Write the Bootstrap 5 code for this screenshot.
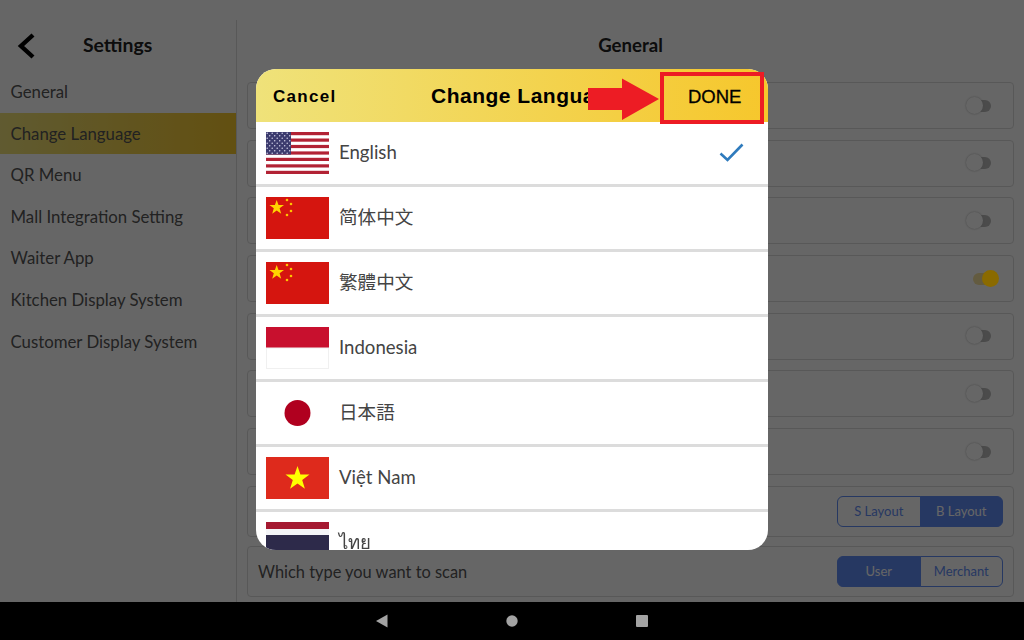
<!DOCTYPE html>
<html lang="en">
<head>
    <meta charset="UTF-8">
    <meta name="viewport" content="width=device-width, initial-scale=1.0">
    <title>Settings - Change Language</title>
    <link rel="stylesheet" href="https://cdn.jsdelivr.net/npm/bootstrap@5.3.0/dist/css/bootstrap.min.css">
    <style>
        html, body { height: 100%; overflow: hidden; }
        body { font-family: Lato, "Noto Sans CJK SC", sans-serif; color: #333; background: #fff; }
        .app-screen { height: 640px; }
        .app-body { height: 602px; padding-top: 20px; }
        .side-pane { width: 237px; border-right: 1px solid #ddd; flex: none; }
        .side-head { height: 51px; padding-left: 16px; }
        .side-title { font-size: 19.4px; font-weight: 700; color: #222; margin-left: 47px; margin-bottom: 2px; }
        .side-link { display: block; height: 41.6px; line-height: 41.6px; padding-left: 10.5px; font-size: 16.8px; color: #555; text-decoration: none; }
        .side-link.is-on { background: linear-gradient(90deg, #efe27a, #f6c72c); }
        .main-pane { padding: 0 10px; overflow: hidden; }
        .main-title { height: 50px; line-height: 50px; font-size: 18.6px; font-weight: 700; text-align: center; color: #222; margin-bottom: 12px; }
        .set-row { border: 1px solid #ddd; border-radius: 4px; height: 47px; margin-bottom: 10.7px; padding: 0 10px; font-size: 16.4px; color: #555; }
        .set-row.tall { height: 51px; margin-bottom: 9.5px; }
        .toggle-track { width: 18px; height: 12px; border-radius: 6px; background: #bbb; position: relative; margin-right: 12px; }
        .toggle-track::before { content: ""; position: absolute; left: -7px; top: -3px; width: 17px; height: 17px; border-radius: 50%; background: #fff; box-shadow: 0 0 2px #aaa; }
        .toggle-track.is-on { background: #f8e3a0; }
        .toggle-track.is-on::before { left: 9px; z-index: 1; background: #8a6a00; box-shadow: none; }
        .seg-wrap .btn { width: 83.5px; height: 31px; padding: 0; font-size: 13px; line-height: 29px; background: #fff; color: #5f8cf5; border-color: #5f8cf5; }
        .seg-wrap .btn.is-on { background: #5f8cf5; color: #fff; opacity: 1; }
        .nav-strip { height: 38px; background: #000; }
        .dim-layer { position: fixed; left: 0; top: 0; right: 0; bottom: 38px; background: rgba(0, 0, 0, .6); }
        .lang-box { position: fixed; left: 256px; top: 69px; width: 512px; height: 481px; border-radius: 20px; overflow: hidden; background: #fff; }
        .lang-head { height: 52.5px; background: linear-gradient(90deg, #efe27a, #f6c72c); color: #000; font-family: "Liberation Sans", Arial, sans-serif; font-weight: 700; position: relative; }
        .lang-cancel { position: absolute; left: 17px; top: 15px; font-size: 17px; letter-spacing: 1.3px; }
        .lang-title { position: absolute; left: 175px; top: 14px; font-size: 21px; letter-spacing: .5px; white-space: nowrap; line-height: 1.2; }
        .lang-done { position: absolute; left: 432px; top: 14px; font-size: 18.5px; font-weight: 400; -webkit-text-stroke: .3px #000; }
        .lang-item { height: 65px; padding: 0 10px; border-bottom: 3px solid #dcdcdc; font-size: 18.6px; color: #444; gap: 10px; }
        .lang-flag { width: 63px; height: 42px; flex: none; display: block; }
        .lang-check { margin-left: auto; margin-right: 14px; }
        .mark-on-top { position: fixed; left: 0; top: 0; width: 1024px; height: 640px; pointer-events: none; }
    </style>
</head>
<body>
<div class="app-screen d-flex flex-column">
    <div class="app-body d-flex">
        <div class="side-pane">
            <div class="side-head d-flex align-items-center">
                <svg width="20" height="26" viewBox="0 0 20 26"><path d="M17 2 L5 13 L17 24" fill="none" stroke="#000" stroke-width="4.4"/></svg>
                <span class="side-title">Settings</span>
            </div>
            <a class="side-link" href="#">General</a>
            <a class="side-link is-on" href="#">Change Language</a>
            <a class="side-link" href="#">QR Menu</a>
            <a class="side-link" href="#">Mall Integration Setting</a>
            <a class="side-link" href="#">Waiter App</a>
            <a class="side-link" href="#">Kitchen Display System</a>
            <a class="side-link" href="#">Customer Display System</a>
        </div>
        <div class="main-pane flex-grow-1">
            <div class="main-title">General</div>
            <div class="set-row d-flex align-items-center justify-content-end"><span class="toggle-track"></span></div>
            <div class="set-row d-flex align-items-center justify-content-end"><span class="toggle-track"></span></div>
            <div class="set-row d-flex align-items-center justify-content-end"><span class="toggle-track"></span></div>
            <div class="set-row d-flex align-items-center justify-content-end"><span class="toggle-track is-on"></span></div>
            <div class="set-row d-flex align-items-center justify-content-end"><span class="toggle-track"></span></div>
            <div class="set-row d-flex align-items-center justify-content-end"><span class="toggle-track"></span></div>
            <div class="set-row d-flex align-items-center justify-content-end"><span class="toggle-track"></span></div>
            <div class="set-row tall d-flex align-items-center justify-content-end">
                <div class="btn-group seg-wrap"><button class="btn">S Layout</button><button class="btn is-on">B Layout</button></div>
            </div>
            <div class="set-row tall d-flex align-items-center justify-content-between">
                <span>Which type you want to scan</span>
                <div class="btn-group seg-wrap"><button class="btn is-on">User</button><button class="btn">Merchant</button></div>
            </div>
        </div>
    </div>
    <div class="nav-strip d-flex align-items-center justify-content-center">
        <svg width="272" height="14" viewBox="0 0 272 14">
            <path d="M0 7 L11.5 0.5 V13.5 Z" fill="#a3a3a3"/>
            <circle cx="136" cy="7" r="5.7" fill="#a3a3a3"/>
            <rect x="260" y="1" width="12" height="12" rx="1" fill="#a3a3a3"/>
        </svg>
    </div>
</div>

<div class="dim-layer"></div>

<div class="lang-box">
    <div class="lang-head">
        <span class="lang-cancel">Cancel</span>
        <span class="lang-title">Change Language</span>
        <span class="lang-done">DONE</span>
    </div>
    <div class="lang-item d-flex align-items-center">
        <svg class="lang-flag" viewBox="0 0 63 42">
            <defs>
                <pattern id="usStars" width="5" height="5" patternUnits="userSpaceOnUse">
                    <circle cx="1.2" cy="1.2" r=".75" fill="#cfcfe6"/>
                    <circle cx="3.7" cy="3.7" r=".75" fill="#cfcfe6"/>
                </pattern>
            </defs>
            <rect width="63" height="42" fill="#fff"/>
            <g fill="#b22234">
                <rect y="0" width="63" height="3.2"/><rect y="6.5" width="63" height="3.2"/><rect y="12.9" width="63" height="3.2"/><rect y="19.4" width="63" height="3.2"/><rect y="25.8" width="63" height="3.2"/><rect y="32.3" width="63" height="3.2"/><rect y="38.8" width="63" height="3.2"/>
            </g>
            <rect width="25" height="22.6" fill="#3c3b6e"/>
            <rect width="25" height="22.6" fill="url(#usStars)"/>
        </svg>
        <span>English</span>
        <svg class="lang-check" width="25" height="19" viewBox="0 0 25 19"><path d="M1.5 10.5 L8.5 17 L23.5 1.5" fill="none" stroke="#2f7bbd" stroke-width="2.6"/></svg>
    </div>
    <div class="lang-item d-flex align-items-center">
        <svg class="lang-flag" viewBox="0 0 63 42">
            <rect width="63" height="42" fill="#d5150f"/>
            <path d="M10.7 3 L12.5 8 L18 8 L13.6 11.3 L15.2 16.8 L10.7 13.5 L6.2 16.8 L7.8 11.3 L3.4 8 L8.9 8 Z" fill="#ffd400"/>
            <circle cx="21" cy="3" r="1.3" fill="#ffc400"/><circle cx="25" cy="7" r="1.3" fill="#ffc400"/><circle cx="25" cy="14" r="1.3" fill="#ffc400"/><circle cx="21" cy="18" r="1.3" fill="#ffc400"/>
        </svg>
        <span>简体中文</span>
    </div>
    <div class="lang-item d-flex align-items-center">
        <svg class="lang-flag" viewBox="0 0 63 42">
            <rect width="63" height="42" fill="#d5150f"/>
            <path d="M10.7 3 L12.5 8 L18 8 L13.6 11.3 L15.2 16.8 L10.7 13.5 L6.2 16.8 L7.8 11.3 L3.4 8 L8.9 8 Z" fill="#ffd400"/>
            <circle cx="21" cy="3" r="1.3" fill="#ffc400"/><circle cx="25" cy="7" r="1.3" fill="#ffc400"/><circle cx="25" cy="14" r="1.3" fill="#ffc400"/><circle cx="21" cy="18" r="1.3" fill="#ffc400"/>
        </svg>
        <span lang="zh-Hant">繁體中文</span>
    </div>
    <div class="lang-item d-flex align-items-center">
        <svg class="lang-flag" viewBox="0 0 63 42">
            <rect width="63" height="21" fill="#c8102e"/>
            <rect x=".5" y="21" width="62" height="20.5" fill="#fff" stroke="#f0f0f0"/>
        </svg>
        <span>Indonesia</span>
    </div>
    <div class="lang-item d-flex align-items-center">
        <svg class="lang-flag" viewBox="0 0 63 42"><circle cx="31.5" cy="21" r="13" fill="#b0001f"/></svg>
        <span lang="ja">日本語</span>
    </div>
    <div class="lang-item d-flex align-items-center">
        <svg class="lang-flag" viewBox="0 0 63 42">
            <rect width="63" height="42" fill="#de2a1c"/>
            <path d="M31.5 9 L34.4 17.6 L43.5 17.6 L36.2 23 L38.9 31.8 L31.5 26.5 L24.1 31.8 L26.8 23 L19.5 17.6 L28.6 17.6 Z" fill="#ffff00"/>
        </svg>
        <span>Việt Nam</span>
    </div>
    <div class="lang-item d-flex align-items-center">
        <svg class="lang-flag" viewBox="0 0 63 42">
            <rect width="63" height="42" fill="#f4f5f8"/>
            <rect width="63" height="7" fill="#a51931"/>
            <rect y="13" width="63" height="15" fill="#2d2a4a"/>
            <rect y="35" width="63" height="7" fill="#a51931"/>
        </svg>
        <span>ไทย</span>
    </div>
</div>

<svg class="mark-on-top" viewBox="0 0 1024 640">
    <path d="M588 88 H622 V78.5 L659 99 L622 120 V110 H588 Z" fill="#ed1c24"/>
    <rect x="662" y="74" width="100" height="48" fill="none" stroke="#ed1c24" stroke-width="4"/>
</svg>
</body>
</html>
